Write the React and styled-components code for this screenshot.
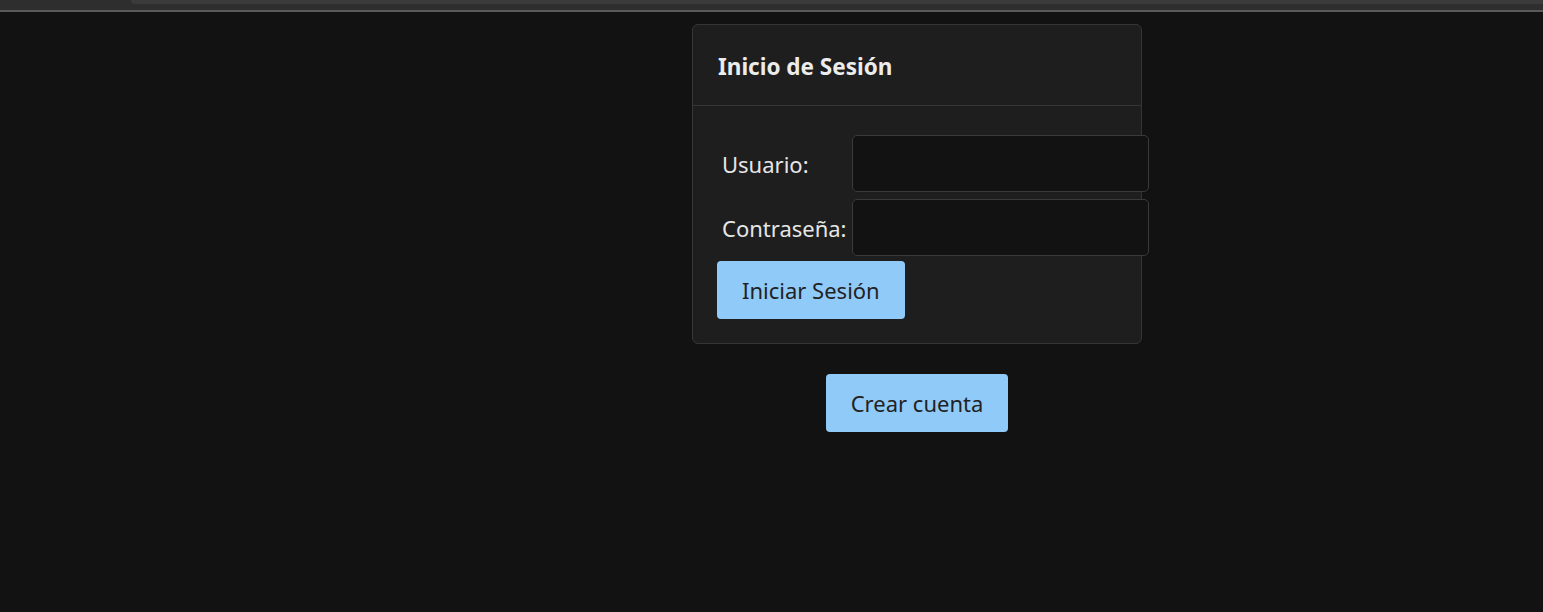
import React from "react";
import styled, { createGlobalStyle } from "styled-components";

const GlobalStyle = createGlobalStyle`
  html, body {
    margin: 0;
    padding: 0;
    background: #121212;
    font-family: "Noto Sans", "Open Sans", "Liberation Sans", sans-serif;
  }
`;

const Chrome = styled.div`
  height: 10px;
  background: #2e2e2e;
  border-bottom: 2px solid #5a5a5a;
  overflow: hidden;
`;

const Tab = styled.div`
  margin-left: 131px;
  height: 4px;
  background: #3b3b3b;
  border-bottom-left-radius: 8px;
`;

const Main = styled.main`
  padding: 12px 0 0 692px;
  display: flex;
  flex-direction: column;
  width: 450px;
`;

const Card = styled.section`
  background: #1e1e1e;
  border: 1px solid #353535;
  border-radius: 6px;
`;

const CardHeader = styled.header`
  height: 80px;
  display: flex;
  align-items: center;
  padding: 0 25px;
  border-bottom: 1px solid #353535;
`;

const Title = styled.h2`
  margin: 0;
  font-size: 22.5px;
  font-weight: 700;
  color: #ececec;
  position: relative;
  top: 1px;
`;

const CardBody = styled.form`
  padding: 29px 24px 24px;
  display: flex;
  flex-direction: column;
  gap: 5px;
`;

const Fields = styled.div`
  display: grid;
  grid-template-columns: 130px 297px;
  row-gap: 7px;
  margin-left: 5px;
`;

const Label = styled.label`
  display: flex;
  align-items: center;
  font-size: 22px;
  color: #e6e6e6;
  white-space: nowrap;
`;

const Input = styled.input`
  height: 57px;
  box-sizing: border-box;
  background: #121212;
  border: 1px solid #3a3a3a;
  border-radius: 5px;
  color: #eee;
  font-size: 18px;
  padding: 0 10px;
  outline: none;
`;

const Button = styled.button`
  align-self: flex-start;
  height: 58px;
  padding: 0 25px;
  background: #90caf9;
  color: #222;
  border: none;
  border-radius: 4px;
  font-family: inherit;
  font-size: 22px;
  cursor: pointer;
`;

const Actions = styled.div`
  display: flex;
  justify-content: center;
  margin-top: 30px;
`;

export default function App() {
  return (
    <>
      <GlobalStyle />
      <Chrome>
        <Tab />
      </Chrome>
      <Main>
        <Card>
          <CardHeader>
            <Title>Inicio de Sesión</Title>
          </CardHeader>
          <CardBody onSubmit={(e) => e.preventDefault()}>
            <Fields>
              <Label htmlFor="usuario">Usuario:</Label>
              <Input id="usuario" type="text" />
              <Label htmlFor="clave">Contraseña:</Label>
              <Input id="clave" type="password" />
            </Fields>
            <Button type="submit">Iniciar Sesión</Button>
          </CardBody>
        </Card>
        <Actions>
          <Button type="button">Crear cuenta</Button>
        </Actions>
      </Main>
    </>
  );
}
